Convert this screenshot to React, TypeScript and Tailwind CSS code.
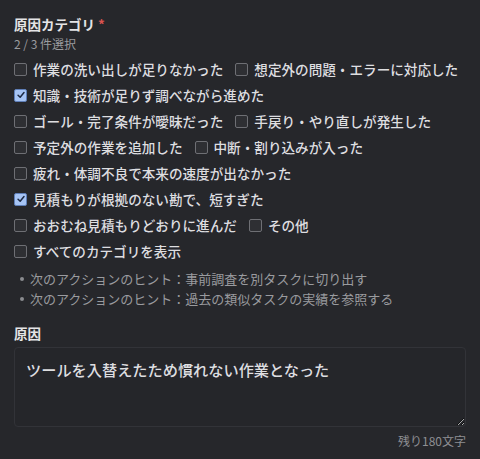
import React from "react";

const rows: { label: string; checked?: boolean }[][] = [
  [{ label: "作業の洗い出しが足りなかった" }, { label: "想定外の問題・エラーに対応した" }],
  [{ label: "知識・技術が足りず調べながら進めた", checked: true }],
  [{ label: "ゴール・完了条件が曖昧だった" }, { label: "手戻り・やり直しが発生した" }],
  [{ label: "予定外の作業を追加した" }, { label: "中断・割り込みが入った" }],
  [{ label: "疲れ・体調不良で本来の速度が出なかった" }],
  [{ label: "見積もりが根拠のない勘で、短すぎた", checked: true }],
  [{ label: "おおむね見積もりどおりに進んだ" }, { label: "その他" }],
  [{ label: "すべてのカテゴリを表示" }],
];

function Box({ checked }: { checked?: boolean }) {
  if (checked) {
    return (
      <span className="flex h-[13px] w-[13px] shrink-0 items-center justify-center rounded-[2px] border border-[#5f7fb8] bg-[#a6c4f5]">
        <svg viewBox="0 0 12 12" className="h-[10px] w-[10px]">
          <path d="M2.5 6.3 L5 8.7 L9.6 3" fill="none" stroke="#1d2a44" strokeWidth="1.8" strokeLinecap="round" strokeLinejoin="round" />
        </svg>
      </span>
    );
  }
  return <span className="h-[13px] w-[13px] shrink-0 rounded-[2px] border border-[#6e6f74] bg-[#2e2f33]" />;
}

export default function App() {
  return (
    <div
      className="min-h-[459px] w-[480px] bg-[#26272b] px-[14px] pt-[15px] text-[#dedee0]"
      style={{ fontFamily: '"Noto Sans CJK JP", "Noto Sans", sans-serif' }}
    >
      <div className="text-[13.5px] font-bold leading-[18px] text-[#e4e4e6]">
        原因カテゴリ <span className="text-[#d9534f]">*</span>
      </div>
      <div className="mt-[3px] text-[12px] leading-[16px] text-[#9a9b9f]">2 / 3 件選択</div>
      <div className="mt-[4px] flex flex-col">
        {rows.map((r, i) => (
          <div key={i} className="flex h-[26px] items-center gap-x-[12px]">
            {r.map((it) => (
              <label key={it.label} className="flex items-center gap-[6px] text-[13.6px] font-medium leading-[18px]">
                <Box checked={it.checked} />
                <span>{it.label}</span>
              </label>
            ))}
          </div>
        ))}
      </div>
      <ul className="mt-[5px] flex flex-col text-[13px] leading-[20px] text-[#9a9b9f]">
        <li className="flex items-center gap-[6px] pl-[6px]">
          <span className="h-[4px] w-[4px] rounded-full bg-[#8a8b8f]" />
          次のアクションのヒント：事前調査を別タスクに切り出す
        </li>
        <li className="flex items-center gap-[6px] pl-[6px]">
          <span className="h-[4px] w-[4px] rounded-full bg-[#8a8b8f]" />
          次のアクションのヒント：過去の類似タスクの実績を参照する
        </li>
      </ul>
      <div className="mt-[15px] text-[13.5px] font-bold leading-[18px] text-[#e4e4e6]">原因</div>
      <textarea
        className="mt-[5px] block h-[80px] w-full resize-y rounded-[4px] border border-[#323338] bg-[#25262a] px-[11px] py-[10px] text-[15.2px] font-medium leading-[22px] text-[#dedee0] outline-none"
        style={{ fontFamily: '"Noto Sans CJK JP", "Noto Sans", sans-serif' }}
        defaultValue="ツールを入替えたため慣れない作業となった"
      />
      <div className="mt-[6px] text-right text-[12px] leading-[16px] text-[#8e8f93]">残り180文字</div>
    </div>
  );
}
